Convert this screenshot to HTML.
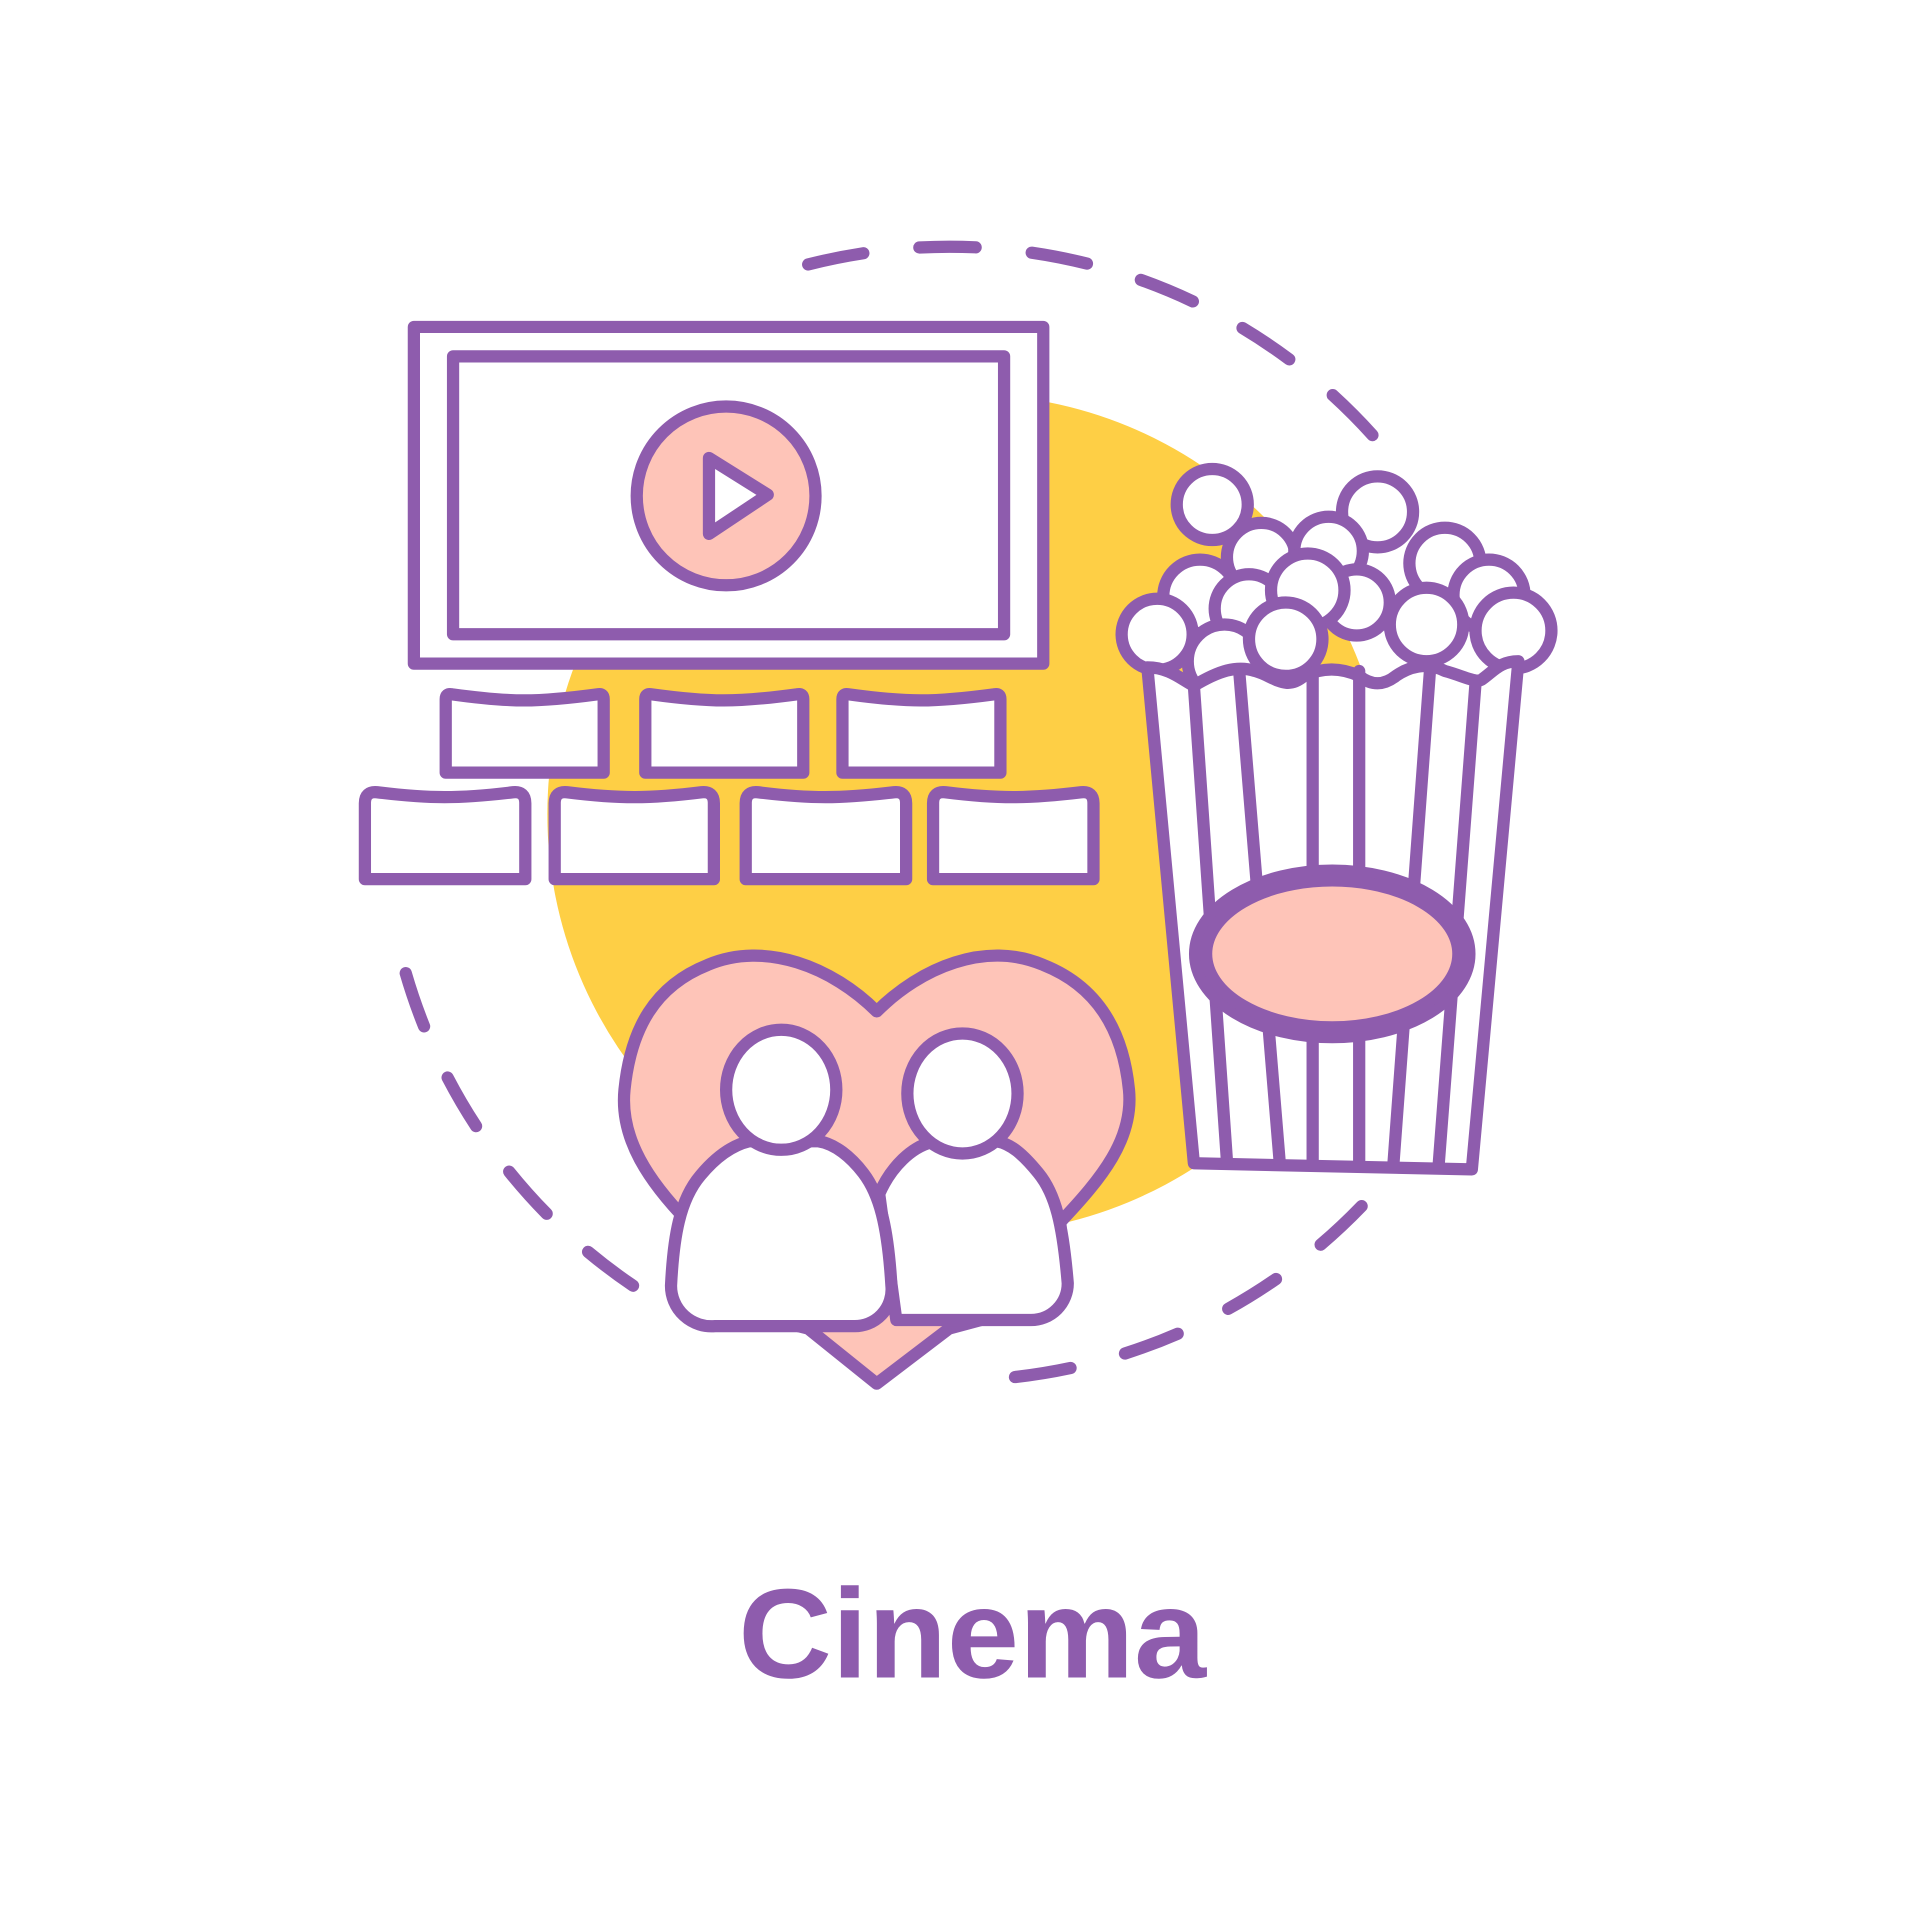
<!DOCTYPE html>
<html><head><style>html,body{margin:0;padding:0;background:#fff}svg{display:block}</style></head>
<body>
<svg width="1920" height="1920" viewBox="0 0 1568 1568" xmlns="http://www.w3.org/2000/svg">
<g fill="none" stroke="#8e5cad" stroke-width="10" stroke-linecap="round" stroke-linejoin="round">
<circle cx="790" cy="665" r="343" fill="#fecf45" stroke="none"/>
<path d="M660,216 A465 465 0 0 1 1125,360" stroke-dasharray="46 46"/>
<path d="M1112,985 A465 465 0 0 1 825,1125" stroke-dasharray="46 46"/>
<path d="M517,1050 A465 465 0 0 1 330,790" stroke-dasharray="46 46"/>
<rect x="338" y="267" width="514" height="275" fill="#fff"/>
<rect x="370" y="291" width="450" height="227" fill="#fff"/>
<circle cx="593" cy="405" r="73" fill="#fec4b8"/>
<path d="M579,374 L627,404 L579,436 Z" fill="#fff"/>
<g fill="#fff">
<path d="M364,631 L364,571 Q364,566 369,567 Q405,572 428,572 Q451,572 488,567 Q493,566 493,571 L493,631 Z"/>
<path d="M527,631 L527,571 Q527,566 532,567 Q568,572 591,572 Q614,572 651,567 Q656,566 656,571 L656,631 Z"/>
<path d="M688,631 L688,571 Q688,566 693,567 Q729,572 752,572 Q775,572 812,567 Q817,566 817,571 L817,631 Z"/>
<path d="M298,718 L298,656 Q298,646 308,647 Q340,651 363,651 Q386,651 419,647 Q429,646 429,656 L429,718 Z"/>
<path d="M453,718 L453,656 Q453,646 463,647 Q495,651 518,651 Q541,651 573,647 Q583,646 583,656 L583,718 Z"/>
<path d="M609,718 L609,656 Q609,646 619,647 Q651,651 674,651 Q697,651 730,647 Q740,646 740,656 L740,718 Z"/>
<path d="M762,718 L762,656 Q762,646 772,647 Q804,651 827,651 Q850,651 883,647 Q893,646 893,656 L893,718 Z"/>
</g>
<path d="M716,826 C680,790 625,768 578,788 C535,805 515,840 510,890 C506,930 530,965 562,998 L560,1060 L660,1085 L716,1130 L775,1085 L868,1060 L866,998 C900,962 926,930 922,890 C917,840 895,805 852,788 C805,768 752,790 716,826 Z" fill="#fec4b8"/>
<path d="M760,933 C745,937 728,952 718,975 L732,1078 L842,1078 A30 30 0 0 0 872,1048 C868,1000 862,975 848,958 C835,942 825,934 814,932 Z" fill="#fff"/>
<path d="M612,932 C595,936 582,948 572,960 C555,980 550,1010 548,1050 A33 33 0 0 0 584,1083 L697,1083 A30 30 0 0 0 728,1050 C725,1000 718,975 705,958 C695,945 682,934 668,932 Z" fill="#fff"/>
<ellipse cx="786" cy="893" rx="45" ry="49" fill="#fff"/>
<ellipse cx="638" cy="890" rx="45" ry="49" fill="#fff"/>
<g fill="#fff">
<circle cx="990" cy="412" r="29"/>
<circle cx="1125" cy="418" r="29"/>
<circle cx="1030" cy="455" r="28"/>
<circle cx="1085" cy="450" r="28"/>
<circle cx="1180" cy="460" r="29"/>
<circle cx="980" cy="487" r="30"/>
<circle cx="1216" cy="486" r="29"/>
<circle cx="945" cy="518" r="29"/>
<circle cx="1236" cy="515" r="31"/>
<circle cx="1020" cy="497" r="28"/>
<circle cx="1108" cy="492" r="27"/>
<circle cx="1068" cy="482" r="30"/>
<circle cx="1000" cy="540" r="30"/>
<circle cx="1050" cy="522" r="30"/>
<circle cx="1165" cy="510" r="30"/>
</g>
<path d="M937,545 C955,545 965,555 975,560 C995,548 1010,543 1025,548 C1040,552 1050,565 1065,552 C1080,545 1095,545 1110,552 C1120,560 1130,560 1140,552 C1150,545 1165,540 1180,548 C1195,552 1205,558 1210,555 C1220,548 1225,540 1240,540 L1202,955 L975,950 Z" fill="#fff"/>
<path d="M975,560 L1002,948 M1012,548 L1045,948 M1072,552 L1072,950 M1110,548 L1110,950 M1168,545 L1138,950 M1205,558 L1175,950"/>
<ellipse cx="1088" cy="779" rx="112" ry="68" fill="#fff"/>
<ellipse cx="1088" cy="779" rx="103" ry="60" fill="#fec4b8"/>
</g>
<text x="794" y="1370" text-anchor="middle" font-family="Liberation Sans, sans-serif" font-weight="bold" font-size="104" fill="#8e5cad" textLength="382" lengthAdjust="spacingAndGlyphs">Cinema</text>
</svg>
</body></html>
